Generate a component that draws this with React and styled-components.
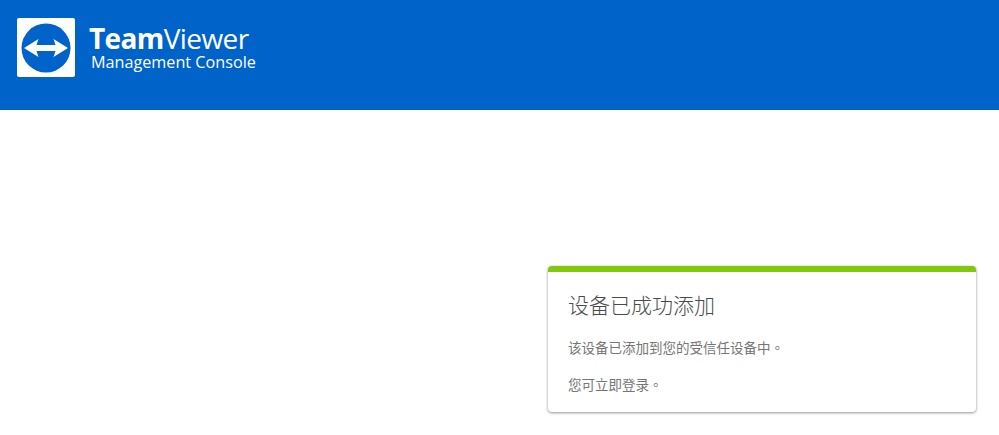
import React from "react";
import styled, { createGlobalStyle } from "styled-components";

const Global = createGlobalStyle`
  html, body { margin: 0; padding: 0; background: #fff; }
  body { font-family: Roboto, "Noto Sans CJK SC", sans-serif; overflow: hidden; }
`;

const Page = styled.div`
  width: 999px;
  height: 435px;
  display: flex;
  flex-direction: column;
  overflow: hidden;
`;

const Header = styled.header`
  height: 110px;
  background: #0063c9;
  display: flex;
  align-items: flex-start;
  padding: 18px 0 0 17px;
  box-sizing: border-box;
  gap: 14px;
`;

const LogoTile = styled.div`
  width: 58px;
  height: 59px;
  background: #fff;
  border-radius: 2px;
  display: flex;
  align-items: center;
  justify-content: center;
`;

const Wordmark = styled.div`
  display: flex;
  flex-direction: column;
  color: #fff;
  font-family: "Open Sans", sans-serif;
`;

const Brand = styled.div`
  font-size: 28px;
  line-height: 32px;
  margin-top: 4px;
  font-weight: 400;
  letter-spacing: -0.6px;
  b { font-weight: 700; }
`;

const Sub = styled.div`
  font-size: 16.2px;
  line-height: 16px;
  margin-left: 2px;
`;

const Main = styled.main`
  flex: 1;
  display: flex;
  justify-content: flex-end;
  padding: 156px 23px 0 0;
`;

const Card = styled.section`
  width: 428.5px;
  height: 146px;
  box-sizing: border-box;
  background: #fff;
  border-top: 6px solid #80c80b;
  border-radius: 4px;
  box-shadow: 0 1px 3px rgba(0, 0, 0, 0.4), 0 0 2px rgba(0, 0, 0, 0.1);
  padding: 17px 20.5px 0;
`;

const Title = styled.h1`
  margin: 0;
  font-size: 21px;
  line-height: 30px;
  font-weight: 300;
  color: #4a4a4a;
  font-family: "Noto Sans CJK SC", sans-serif;
`;

const Text = styled.p`
  margin: ${(p) => p.$top}px 0 0;
  font-size: 13.5px;
  line-height: 20px;
  color: #757575;
  font-family: "Noto Sans CJK SC", sans-serif;
  font-weight: 400;
`;

const Stop = styled.span`
  font-family: "Noto Sans CJK TC", sans-serif;
`;

const Logo = () => (
  <svg width="50" height="50" viewBox="0 0 50 50" aria-hidden="true">
    <circle cx="25" cy="25" r="24.5" fill="#0063c9" />
    <path
      d="M3 25 L17.5 16 L15.5 22 Q25 21.8 34.5 22 L32.5 16 L47 25 L32.5 34 L34.5 28 Q25 28.2 15.5 28 L17.5 34 Z"
      fill="#fff"
    />
  </svg>
);

export default function App() {
  return (
    <Page>
      <Global />
      <Header>
        <LogoTile>
          <Logo />
        </LogoTile>
        <Wordmark>
          <Brand>
            <b>Team</b>Viewer
          </Brand>
          <Sub>Management Console</Sub>
        </Wordmark>
      </Header>
      <Main>
        <Card>
          <Title>设备已成功添加</Title>
          <Text $top={18}>该设备已添加到您的受信任设备中<Stop>。</Stop></Text>
          <Text $top={17}>您可立即登录<Stop>。</Stop></Text>
        </Card>
      </Main>
    </Page>
  );
}
